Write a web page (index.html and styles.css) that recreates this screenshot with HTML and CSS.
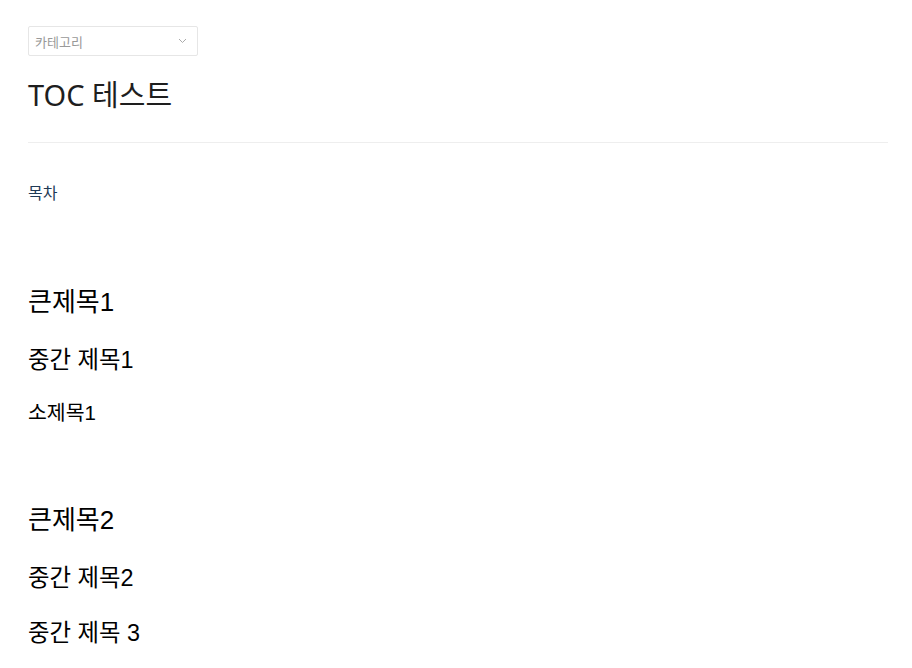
FILE: index.html
```html
<!DOCTYPE html>
<html lang="ko">
<head>
  <meta charset="UTF-8" />
  <title>TOC 테스트</title>
  <meta name="viewport" content="width=device-width, initial-scale=1.0" />
  <link rel="stylesheet" href="styles.css">
</head>
<body>

  <div class="post-header">
    <div class="category-select">
      <span>카테고리</span>
      <svg class="chevron" width="9" height="6" viewBox="0 0 9 6"><path d="M1 1l3.5 3.5L8 1" fill="none" stroke="#aaa" stroke-width="1"/></svg>
    </div>
    <h1 class="post-title">TOC 테스트</h1>
  </div>

  <div class="post-body">
    <p class="toc-label">목차</p>

    <h2>큰제목1</h2>
    <h3>중간 제목1</h3>
    <h4>소제목1</h4>

    <h2>큰제목2</h2>
    <h3>중간 제목2</h3>
    <h3>중간 제목 3</h3>
  </div>

</body>
</html>
```

FILE: styles.css
```css
body {
  font-family: "Noto Sans", "Noto Sans CJK KR", sans-serif;
  background-color: #ffffff;
  color: #222;
  margin: 0;
  padding: 26px 24px 0 28px;
}

.post-header {
  border-bottom: 1px solid #eeeeee;
  padding-bottom: 27px;
}

.category-select {
  width: 170px;
  height: 30px;
  box-sizing: border-box;
  border: 1px solid #e6e6e6;
  border-radius: 2px;
  display: flex;
  align-items: center;
  justify-content: space-between;
  padding: 0 10px 0 6px;
  font-size: 13px;
  color: #999;
}

.chevron {
  display: block;
}

.post-title {
  font-size: 29px;
  font-weight: 400;
  line-height: 40px;
  margin: 19px 0 0;
  color: #1e1e1e;
}

.post-body {
  font-family: "Liberation Sans", "Noto Sans CJK KR", sans-serif;
  color: #000;
}

.toc-label {
  font-family: "Noto Sans", "Noto Sans CJK KR", sans-serif;
  font-size: 16px;
  line-height: 24px;
  color: #1f3a56;
  margin: 38px 0 81px;
}

h2, h3, h4 {
  font-weight: 400;
  margin: 25px 0;
}

h2 {
  font-size: 26px;
  line-height: 32px;
  margin: 78px 0 27px;
}

h3 {
  font-size: 23.4px;
  line-height: 30px;
}

h4 {
  font-size: 20.5px;
  line-height: 26px;
}
```
